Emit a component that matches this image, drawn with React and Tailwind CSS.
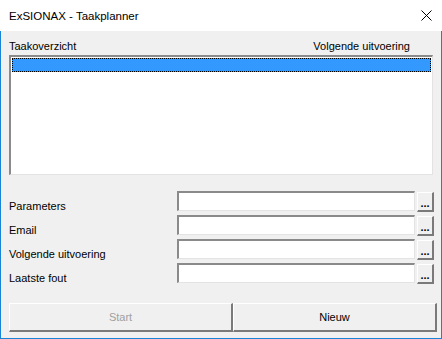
const fields = ['Parameters', 'Email', 'Volgende uitvoering', 'Laatste fout'];

const sunken =
  'border-t-2 border-l-2 border-b border-r border-t-[#8a8a8a] border-l-[#8a8a8a] border-b-[#e3e3e3] border-r-[#e3e3e3] bg-white';

const raised =
  'border-t border-l border-b-2 border-r-2 border-t-white border-l-white border-b-[#7a7a7a] border-r-[#7a7a7a] bg-[#f0f0f0]';

const App = () => {
  return (
    <div
      className="w-[442px] h-[339px] flex flex-col text-black"
      style={{ fontFamily: '"Liberation Sans", Arial, sans-serif' }}
    >
      {/* Title bar */}
      <div className="h-[31px] bg-white flex items-center justify-between pl-[9px] pr-[9px]">
        <span className="text-[11.5px] leading-[14px]">ExSIONAX - Taakplanner</span>
        <svg width="11" height="11" viewBox="0 0 11 11" className="mr-[1px]">
          <path d="M0.5 0.5 L10.5 10.5 M10.5 0.5 L0.5 10.5" stroke="#000" strokeWidth="1" fill="none" />
        </svg>
      </div>

      {/* Body */}
      <div className="flex-1 bg-[#f0f0f0] border-x border-b border-[#1883d7] pl-[8px] pt-[8px] text-[11px]">
        <div className="w-[424px] h-[15px] flex justify-between items-center leading-[15px] pr-[23px]">
          <span>Taakoverzicht</span>
          <span>Volgende uitvoering</span>
        </div>

        {/* List */}
        <div className={`mt-[1px] w-[424px] h-[120px] ${sunken} pt-px px-px`}>
          <div className="h-[14px] bg-[#3399ff] border border-dotted border-black" />
        </div>

        {/* Fields */}
        <div className="mt-[16px] flex flex-col gap-[4px]">
          {fields.map((f) => (
            <div key={f} className="flex h-[20px]">
              <div className="w-[168px] pt-[9px] leading-[13px]">{f}</div>
              <div className={`w-[238px] h-[20px] ${sunken}`} />
              <button
                className={`ml-[2px] mt-[1px] w-[17px] h-[20px] ${raised} flex items-end justify-center pb-[3px] text-[11px] font-bold leading-[8px]`}
              >
                ...
              </button>
            </div>
          ))}
        </div>

        {/* Buttons */}
        <div className="mt-[20px] flex">
          <button className={`w-[224px] h-[29px] ${raised} text-[#a0a0a0] text-[11px]`}>Start</button>
          <button className={`w-[204px] h-[29px] ${raised} text-black text-[11px]`}>Nieuw</button>
        </div>
      </div>
    </div>
  );
};

export default App;
